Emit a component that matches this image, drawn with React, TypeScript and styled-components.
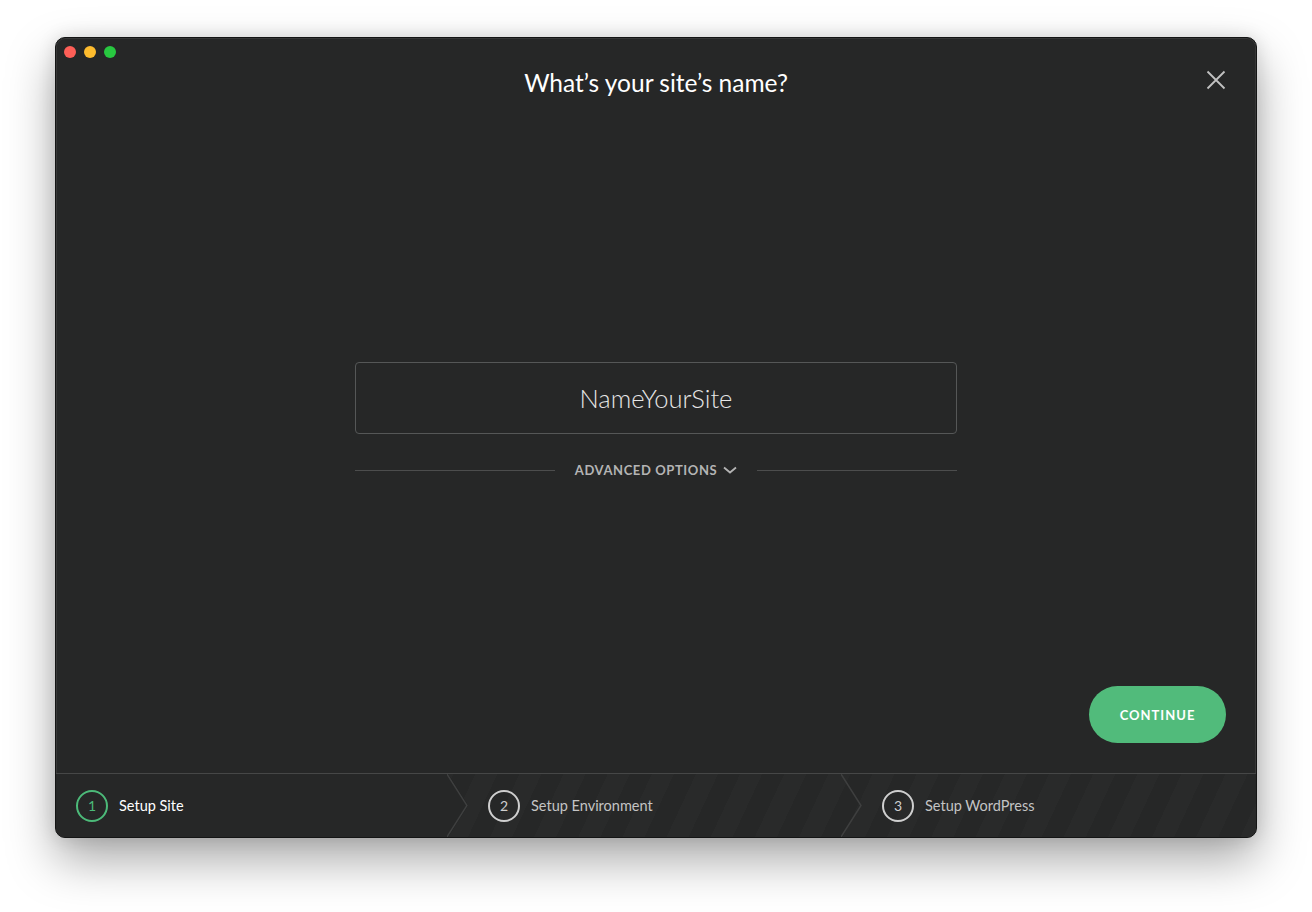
import React from "react";
import styled, { createGlobalStyle } from "styled-components";

const Global = createGlobalStyle`
  html, body { margin: 0; padding: 0; background: #ffffff; }
  body { font-family: Lato, "Open Sans", sans-serif; }
  * { box-sizing: border-box; }
`;

const Stage = styled.div`
  width: 1312px;
  height: 912px;
  padding-top: 37px;
  display: flex;
  justify-content: center;
  align-items: flex-start;
`;

const Window = styled.div`
  position: relative;
  width: 1202px;
  height: 801px;
  border: 1px solid #141515;
  border-radius: 10px;
  background: #262727;
  overflow: hidden;
  display: flex;
  flex-direction: column;
  box-shadow: 0 22px 48px rgba(0, 0, 0, 0.34), 0 0 18px rgba(0, 0, 0, 0.12),
    inset 0 0 0 1px rgba(255, 255, 255, 0.08);
`;

const Lights = styled.div`
  position: absolute;
  top: 8px;
  left: 8px;
  display: flex;
  gap: 8px;
`;

const Light = styled.span<{ $c: string }>`
  width: 12px;
  height: 12px;
  border-radius: 50%;
  background: ${(p) => p.$c};
`;

const Header = styled.header`
  height: 60px;
  padding-top: 30px;
  display: flex;
  justify-content: center;
`;

const Title = styled.h1`
  margin: 0;
  font-family: Lato, sans-serif;
  font-size: 24.5px;
  line-height: 30px;
  font-weight: 400;
  color: #ffffff;
`;

const Close = styled.button`
  position: absolute;
  top: 31px;
  right: 29px;
  width: 22px;
  height: 22px;
  padding: 0;
  border: 0;
  background: none;
  display: flex;
  align-items: center;
  justify-content: center;
`;

const Main = styled.main`
  flex: 1;
  display: flex;
  flex-direction: column;
  align-items: center;
`;

const Form = styled.div`
  margin-top: 264px;
  width: 602px;
  display: flex;
  flex-direction: column;
`;

const NameInput = styled.div`
  height: 72px;
  border: 1px solid #555757;
  border-radius: 4px;
  display: flex;
  align-items: center;
  justify-content: center;
  font-family: Lato, sans-serif;
  font-weight: 300;
  font-size: 25.5px;
  color: #e6e6e6;
`;

const Advanced = styled.div`
  margin-top: 24px;
  height: 24px;
  display: flex;
  align-items: center;
  gap: 20px;
`;

const Rule = styled.div`
  flex: 1;
  height: 1px;
  background: #4c4d4d;
`;

const AdvLabel = styled.span`
  display: flex;
  align-items: center;
  gap: 6px;
  font-family: Lato, sans-serif;
  font-weight: 700;
  font-size: 13px;
  letter-spacing: 0.6px;
  color: #b4b4b4;
`;

const ButtonRow = styled.div`
  margin-top: auto;
  align-self: stretch;
  display: flex;
  justify-content: flex-end;
  padding: 0 30px 30px 0;
`;

const Continue = styled.button`
  width: 137px;
  height: 57px;
  border: 0;
  border-radius: 29px;
  background: #51bb7b;
  color: #ffffff;
  font-family: Lato, sans-serif;
  font-weight: 700;
  font-size: 13px;
  letter-spacing: 1px;
`;

const Footer = styled.footer`
  height: 64px;
  border-top: 1px solid #464747;
  display: flex;
  background: repeating-linear-gradient(
    115deg,
    #262727 0px,
    #262727 20px,
    #292a2a 20px,
    #292a2a 40px
  );
`;

const Step = styled.div<{ $w?: number; $first?: boolean; $active?: boolean }>`
  position: relative;
  ${(p) => (p.$w ? `width: ${p.$w}px; flex: none;` : "flex: 1;")}
  margin-left: ${(p) => (p.$first ? "0" : "-20px")};
  padding-left: ${(p) => (p.$first ? "20px" : "40px")};
  display: flex;
  align-items: center;
  gap: 11px;
  ${(p) =>
    p.$active
      ? `background: #262727; z-index: 2;
         clip-path: polygon(0 0, calc(100% - 20px) 0, 100% 50%, calc(100% - 20px) 100%, 0 100%);`
      : "z-index: 1;"}
`;

const Chevron = styled.svg`
  position: absolute;
  right: 0;
  top: 0;
`;

const Circle = styled.span<{ $active?: boolean }>`
  width: 32px;
  height: 32px;
  border-radius: 50%;
  border: 2px solid ${(p) => (p.$active ? "#4cba79" : "#cfcfcf")};
  color: ${(p) => (p.$active ? "#4cba79" : "#cfcfcf")};
  display: flex;
  align-items: center;
  justify-content: center;
  font-family: Lato, sans-serif;
  font-size: 14px;
  font-weight: 400;
`;

const StepLabel = styled.span<{ $active?: boolean }>`
  font-family: Lato, sans-serif;
  font-size: 14.5px;
  color: ${(p) => (p.$active ? "#ffffff" : "#c4c4c4")};
`;

const steps = [
  { n: 1, label: "Setup Site", w: 412 },
  { n: 2, label: "Setup Environment", w: 414 },
  { n: 3, label: "Setup WordPress" },
];

export default function App() {
  return (
    <>
      <Global />
      <Stage>
        <Window>
          <Lights>
            <Light $c="#fe5f57" />
            <Light $c="#febc2e" />
            <Light $c="#28c840" />
          </Lights>
          <Close aria-label="Close">
            <svg width="20" height="20" viewBox="0 0 20 20">
              <path
                d="M1.5 1.5 L18.5 18.5 M18.5 1.5 L1.5 18.5"
                stroke="#c2c2c2"
                strokeWidth="1.8"
                fill="none"
              />
            </svg>
          </Close>
          <Header>
            <Title>What’s your site’s name?</Title>
          </Header>
          <Main>
            <Form>
              <NameInput>NameYourSite</NameInput>
              <Advanced>
                <Rule />
                <AdvLabel>
                  ADVANCED OPTIONS
                  <svg width="14" height="8" viewBox="0 0 14 8">
                    <path
                      d="M1 1.5 Q7 6.5 7 6.5 Q7 6.5 13 1.5"
                      stroke="#b4b4b4"
                      strokeWidth="1.8"
                      fill="none"
                    />
                  </svg>
                </AdvLabel>
                <Rule />
              </Advanced>
            </Form>
            <ButtonRow>
              <Continue>CONTINUE</Continue>
            </ButtonRow>
          </Main>
          <Footer>
            {steps.map((s, i) => (
              <Step key={s.n} $w={s.w} $first={i === 0} $active={i === 0}>
                <Circle $active={i === 0}>{s.n}</Circle>
                <StepLabel $active={i === 0}>{s.label}</StepLabel>
                {i < steps.length - 1 && (
                  <Chevron width="21" height="63" viewBox="0 0 21 63">
                    <polyline
                      points="0,0 20,31.5 0,63"
                      stroke="#3e3f3f"
                      strokeWidth="1.5"
                      fill="none"
                    />
                  </Chevron>
                )}
              </Step>
            ))}
          </Footer>
        </Window>
      </Stage>
    </>
  );
}
